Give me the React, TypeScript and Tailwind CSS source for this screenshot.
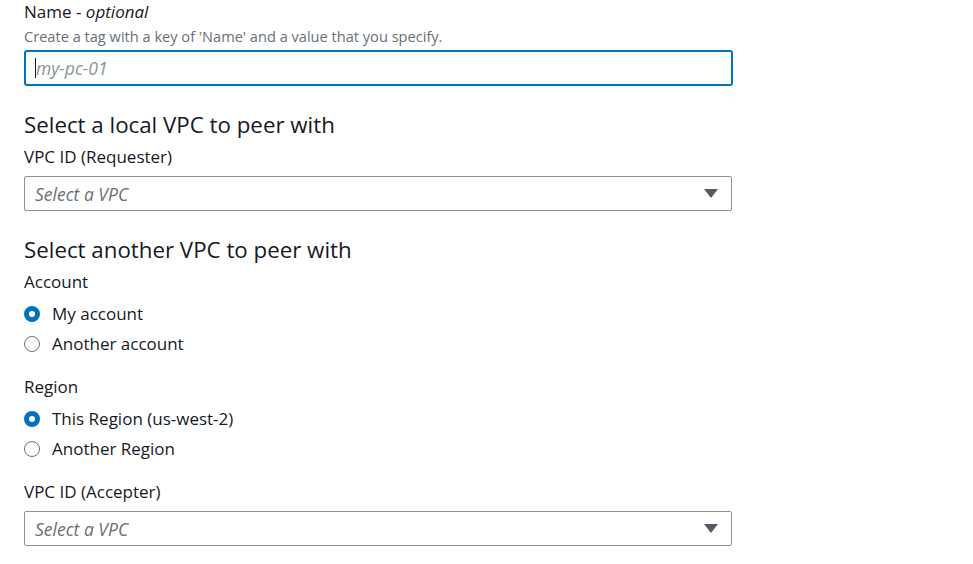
import React from 'react';

const font = { fontFamily: '"Open Sans", "Liberation Sans", Arial, sans-serif' };

function Radio({ label, checked }: { label: string; checked?: boolean }) {
  return (
    <div className="flex items-center h-[30px]">
      {checked ? (
        <span className="box-border shrink-0 w-4 h-4 rounded-full border-[5px] border-[#0073bb] bg-white" />
      ) : (
        <span className="box-border shrink-0 w-4 h-4 rounded-full border-[1.5px] border-[#687078] bg-white" />
      )}
      <span className="ml-3 text-[17px] leading-[22px] text-[#16191f]">{label}</span>
    </div>
  );
}

function SelectBox() {
  return (
    <div className="flex items-center justify-between h-[35px] w-[708px] border border-[#8d9399] rounded-[2px] pl-[10px] pr-[13px] bg-white">
      <span className="italic text-[17.5px] leading-[22px] text-[#687078]">Select a VPC</span>
      <svg width="14" height="9" viewBox="0 0 14 9">
        <path d="M0 0 H14 L7 9 Z" fill="#545b64" />
      </svg>
    </div>
  );
}

export default function App() {
  return (
    <div className="w-[973px] h-[564px] bg-white pl-6 pt-[1px] text-[#16191f]" style={font}>
      <div className="text-[17px] leading-[22px]">
        Name - <span className="italic">optional</span>
      </div>
      <div className="mt-[3px] text-[14.6px] leading-[20px] text-[#687078]">
        Create a tag with a key of 'Name' and a value that you specify.
      </div>
      <div className="mt-1 flex items-center h-[36px] w-[709px] border-2 border-[#0073bb] rounded-[3px] pl-[9px]">
        <span className="w-px h-5 bg-[#16191f]" />
        <span className="italic text-[17.5px] leading-[22px] text-[#879596]">my-pc-01</span>
      </div>

      <h2 className="mt-[25px] text-[22.3px] leading-[28px] font-normal">Select a local VPC to peer with</h2>
      <div className="mt-[7px] text-[17px] leading-[22px]">VPC ID (Requester)</div>
      <div className="mt-2">
        <SelectBox />
      </div>

      <h2 className="mt-[25px] text-[22.3px] leading-[28px] font-normal">Select another VPC to peer with</h2>
      <div className="mt-[7px] text-[17px] leading-[22px]">Account</div>
      <div className="mt-[6px]">
        <Radio label="My account" checked />
        <Radio label="Another account" />
      </div>

      <div className="mt-[17px] text-[17px] leading-[22px]">Region</div>
      <div className="mt-[6px]">
        <Radio label="This Region (us-west-2)" checked />
        <Radio label="Another Region" />
      </div>

      <div className="mt-[17px] text-[17px] leading-[22px]">VPC ID (Accepter)</div>
      <div className="mt-2">
        <SelectBox />
      </div>
    </div>
  );
}
